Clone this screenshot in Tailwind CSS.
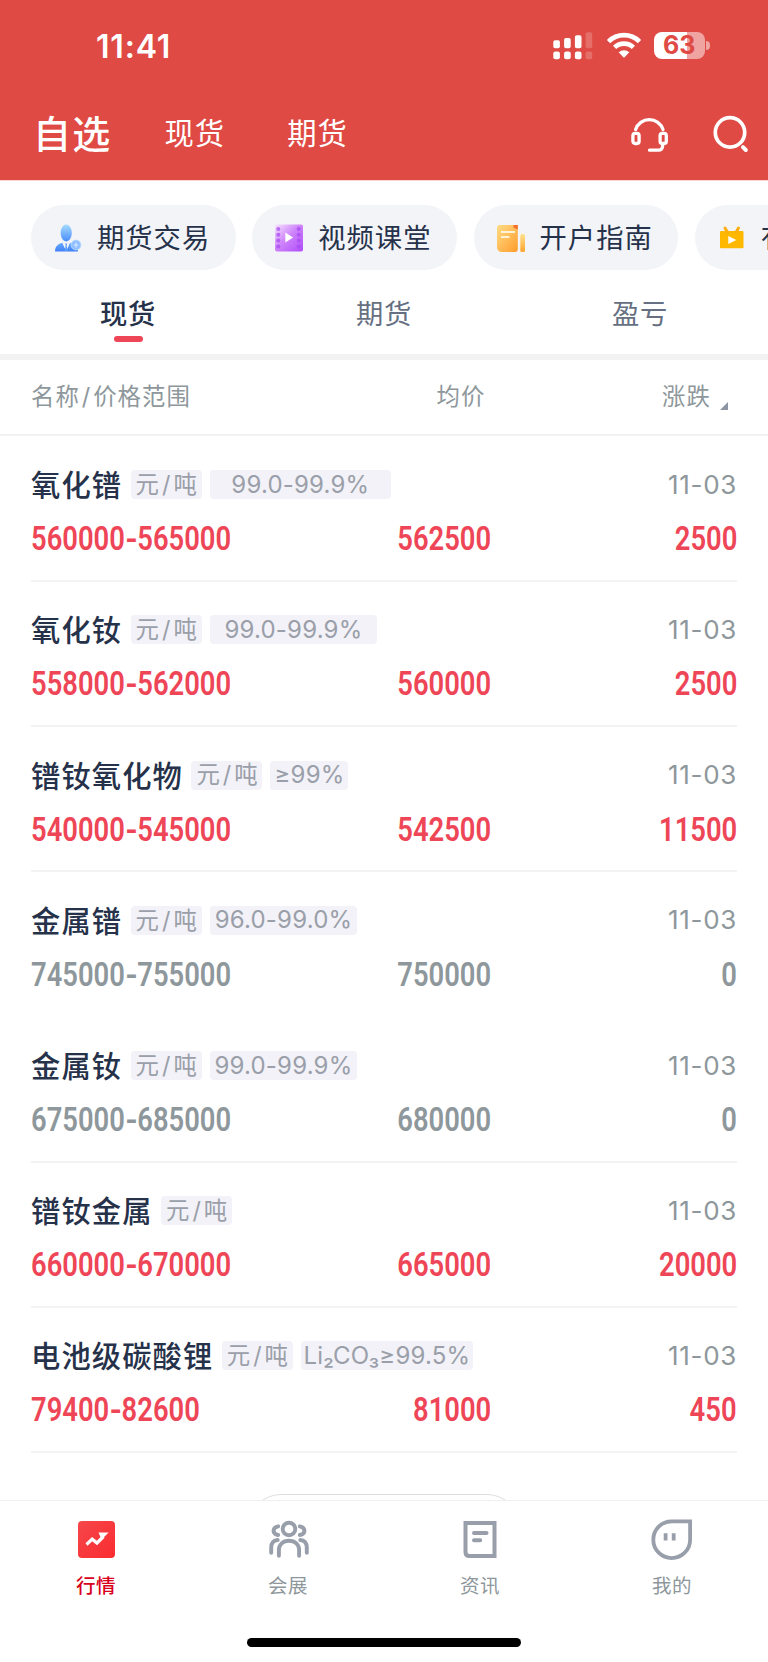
<!DOCTYPE html>
<html lang="zh-CN">
<head>
    <meta charset="UTF-8">
    <meta name="viewport" content="width=device-width, initial-scale=1.0">
    <title>行情</title>
    <script src="https://cdn.jsdelivr.net/npm/@tailwindcss/browser@4"></script>
</head>
<body class="bg-white font-['Inter','Noto_Sans_CJK_SC',sans-serif]">
    <div class="w-[768px] h-[1662px] flex flex-col overflow-hidden">

        <!-- Status bar + top navigation -->
        <header class="h-[181px] shrink-0 bg-[#df4a44] border-b border-[#fbd3d3] text-white flex flex-col">
            <div class="h-[90px] flex items-center justify-between pl-[96px] pr-[58px]">
                <span class="text-[32px] leading-none font-semibold pt-[3px] tracking-[0.8px]">11:41</span>
                <div class="flex items-center pt-[1px]">
                    <svg class="w-[40px] h-[28px]" viewBox="0 0 40 28" fill="#fff">
                        <rect x="0.3" y="8.3" width="6.6" height="8" rx="1.8"/>
                        <rect x="11.1" y="6" width="6.6" height="10.3" rx="1.8"/>
                        <rect x="21.9" y="3.2" width="6.6" height="13" rx="1.8"/>
                        <rect x="32.6" y="0.3" width="6.6" height="16" rx="1.8" opacity=".2"/>
                        <rect x="0.3" y="19.6" width="6.6" height="7.6" rx="2"/>
                        <rect x="11.1" y="19.6" width="6.6" height="7.6" rx="2"/>
                        <rect x="21.9" y="19.6" width="6.6" height="7.6" rx="2"/>
                        <rect x="32.6" y="19.6" width="6.6" height="7.6" rx="2" opacity=".2"/>
                    </svg>
                    <svg class="w-[36px] h-[28px] ml-[13px]" viewBox="0 0 36 28">
                        <path d="M2.5 9.6A22 22 0 0 1 33.5 9.6" fill="none" stroke="#fff" stroke-width="4.8"/>
                        <path d="M8.6 15.4A13.6 13.6 0 0 1 27.4 15.4" fill="none" stroke="#fff" stroke-width="4.6"/>
                        <path d="M12.7 20.3A8 8 0 0 1 23.3 20.3L18.6 25.2Q18 25.8 17.4 25.2Z" fill="#fff"/>
                    </svg>
                    <div class="ml-[12px] w-[51.5px] h-[27px] rounded-[8px] bg-linear-to-r from-white from-64% to-white/50 to-64% flex items-center justify-center">
                        <span class="text-[25px] leading-[27px] font-bold text-[#df4a44]">63</span>
                    </div>
                    <div class="ml-[1px] w-[4px] h-[9px] rounded-r-full bg-white/50"></div>
                </div>
            </div>
            <div class="h-[87px] flex items-center pl-[33px] pr-[16px]">
                <span class="text-[38px] leading-none font-medium tracking-[1.2px]">自选</span>
                <span class="text-[29.3px] leading-none tracking-[1.1px] ml-[53px]">现货</span>
                <span class="text-[29.3px] leading-none tracking-[1.1px] ml-[62px]">期货</span>
                <svg class="w-[40px] h-[40px] ml-auto" viewBox="0 0 40 40" fill="none" stroke="#fff" stroke-width="3.3" stroke-linecap="round">
                    <path d="M5.6 15.6A14.4 14.4 0 0 1 33 15.6"/>
                    <rect x="2.9" y="19.3" width="6.2" height="10.2" rx="2.2"/>
                    <rect x="30.1" y="19.3" width="6.2" height="10.2" rx="2.2"/>
                    <path d="M32.6 30.5v1.2c0 3-1.5 4.5-4.5 4.5H19.5"/>
                </svg>
                <svg class="w-[40px] h-[40px] ml-[42px]" viewBox="0 0 40 40" fill="none" stroke="#fff" stroke-linecap="round">
                    <circle cx="18" cy="18.4" r="14.7" stroke-width="3.7"/>
                    <path d="M31 33.2l2.8 2.8" stroke-width="4"/>
                </svg>
            </div>
        </header>

        <!-- Shortcuts -->
        <div class="h-[89px] shrink-0 pt-[24px] pl-[31px] flex gap-[16.4px] text-[27.3px] leading-none tracking-[1px] text-[#26314a]">
            <div class="w-[204.9px] h-[65px] shrink-0 rounded-full bg-[#f2f4f8] flex items-center pl-[23px] gap-[15px]">
                <svg class="w-[28px] h-[28px]" viewBox="0 0 28 28">
                    <defs>
                        <linearGradient id="head" x1="0" y1="0" x2="0" y2="1"><stop stop-color="#a5dcff"/><stop offset="1" stop-color="#4a8dfb"/></linearGradient>
                        <linearGradient id="body" x1="0" y1="0" x2="0" y2="1"><stop stop-color="#69aaff"/><stop offset="1" stop-color="#3f80f6"/></linearGradient>
                    </defs>
                    <path d="M1 27.5C1 22 4.5 20 8.5 18.8L12.2 27l3.6-8.2c4 1.2 8.2 3.5 8.2 8.7z" fill="url(#body)"/>
                    <path d="M8.5 18.8h7.4L12.2 27z" fill="#f2f4f8"/>
                    <path d="M11.2 19.5h2l-.5 1.9.9 5.6h-2.8l.9-5.6z" fill="#5b9dfc"/>
                    <ellipse cx="12.2" cy="9" rx="5.6" ry="8.5" fill="url(#head)"/>
                    <circle cx="22" cy="21" r="4.9" fill="#8fbfff" stroke="#b9d9ff" stroke-width=".8"/>
                    <path d="M22 18.4v5.2M19.6 21h4.8" stroke="#d3e8ff" stroke-width="1.2"/>
                </svg>
                <span class="pt-[2px]">期货交易</span>
            </div>
            <div class="w-[204.9px] h-[65px] shrink-0 rounded-full bg-[#f2f4f8] flex items-center pl-[23px] gap-[15px]">
                <svg class="w-[28px] h-[28px]" viewBox="0 0 28 28">
                    <defs>
                        <linearGradient id="film" x1="0" y1="0" x2="1" y2="1"><stop stop-color="#f7e4ff"/><stop offset=".45" stop-color="#cf86fb"/><stop offset="1" stop-color="#b04bfa"/></linearGradient>
                    </defs>
                    <rect x="0" y=".5" width="28" height="27" rx="2" fill="url(#film)"/>
                    <g fill="#a94cf0" opacity=".75">
                        <circle cx="3.3" cy="5" r="2"/><circle cx="3.3" cy="10.8" r="2"/><circle cx="3.3" cy="16.6" r="2"/><circle cx="3.3" cy="22.4" r="2"/>
                        <circle cx="23.7" cy="5" r="2"/><circle cx="23.7" cy="10.8" r="2"/><circle cx="23.7" cy="16.6" r="2"/><circle cx="23.7" cy="22.4" r="2"/>
                    </g>
                    <path d="M10.3 8.5l7.8 5-7.8 5z" fill="#fff"/>
                </svg>
                <span class="pt-[2px]">视频课堂</span>
            </div>
            <div class="w-[204.9px] h-[65px] shrink-0 rounded-full bg-[#f2f4f8] flex items-center pl-[23px] gap-[15px]">
                <svg class="w-[28px] h-[28px]" viewBox="0 0 28 28">
                    <defs>
                        <linearGradient id="note" x1="0" y1="0" x2="1" y2="1"><stop stop-color="#ffdc85"/><stop offset="1" stop-color="#ff9c2c"/></linearGradient>
                        <linearGradient id="pen" x1="0" y1="0" x2="0" y2="1"><stop stop-color="#ffe28c"/><stop offset="1" stop-color="#ffa32e"/></linearGradient>
                    </defs>
                    <path d="M2.5 1H20.8V25c0 2-1 3-2.5 3H5C2 28 0 26 0 23V3.5C0 2 1 1 2.5 1z" fill="url(#note)"/>
                    <path d="M16.5 1h4.3v4.5l-4.3-2z" fill="#f4702c"/>
                    <rect x="23.3" y="10" width="4.7" height="18" rx="1.5" fill="url(#pen)"/>
                    <path d="M4 8h14M4 13h8.500" stroke="#fff3d6" stroke-width="2"/>
                </svg>
                <span class="pt-[2px]">开户指南</span>
            </div>
            <div class="w-[204.9px] h-[65px] shrink-0 rounded-full bg-[#f2f4f8] flex items-center pl-[24px] gap-[14px]">
                <svg class="w-[28px] h-[28px]" viewBox="0 0 28 28">
                    <rect x="1" y="7" width="23.5" height="17.3" rx="1" fill="#ffb800"/>
                    <path d="M6 4l2.3 4M19.5 4l-2.3 4" stroke="#ffad0d" stroke-width="3" stroke-linecap="round"/>
                    <path d="M9.3 12v8l8-4z" fill="#fff"/>
                </svg>
                <span class="pt-[2px]">有</span>
            </div>
        </div>

        <!-- Tabs -->
        <nav class="h-[90px] shrink-0 border-b-[6px] border-[#f2f2f2] grid grid-cols-3 text-[27.3px] leading-none tracking-[0.8px] text-[#667082] text-center">
            <div class="pt-[31px] flex flex-col items-center">
                <span class="font-medium text-[#26314a]">现货</span>
                <span class="mt-[8px] w-[29px] h-[6px] rounded-full bg-[#ee4557]"></span>
            </div>
            <div class="pt-[31px]">期货</div>
            <div class="pt-[31px]">盈亏</div>
        </nav>

        <!-- Table head -->
        <div class="h-[76px] shrink-0 border-b-2 border-[#f2f2f2] flex items-center px-[31px] pb-[1px] text-[23.4px] leading-none tracking-[1px] text-[#8e979b]">
            <span class="w-[405.5px]">名称<span class="mx-[2px]">/</span>价格范围</span>
            <span class="w-[225.5px]">均价</span>
            <span>涨跌</span>
            <svg class="w-[8px] h-[8px] ml-[9px] mt-[18px]" viewBox="0 0 8 8"><path d="M8 0v8H0z" fill="#8f96a3"/></svg>
        </div>

        <!-- Price rows -->
        <main id="priceList" class="shrink-0 h-[1017.4px] px-[31px] pt-[0.8px]"></main>

        <div class="flex-1 min-h-0 overflow-hidden flex justify-center pt-[40.6px]">
            <div class="w-[272px] h-[66px] shrink-0 rounded-full border border-[#dedede]"></div>
        </div>

        <!-- Bottom navigation -->
        <footer class="h-[162px] shrink-0 bg-white border-t border-[#f0f0f0] flex flex-col items-center text-[19.5px] leading-none tracking-[0.5px] text-[#8e979b]">
            <div class="w-full h-[137px] grid grid-cols-4">
                <div class="pt-[17px] flex flex-col items-center gap-[16px] text-[#d9001b] font-medium">
                    <svg class="w-[42px] h-[43px]" viewBox="0 0 42 43">
                        <defs><linearGradient id="trend" x1="0" y1="0" x2="1" y2="1"><stop stop-color="#f5474a"/><stop offset="1" stop-color="#fa2c30"/></linearGradient></defs>
                        <rect x="3" y="3" width="37" height="37" rx="4" fill="url(#trend)"/>
                        <path d="M11.5 26.5l5.7-5.3 4.8 3.800L28.5 18.5" fill="none" stroke="#fff" stroke-width="3.2"/>
                        <path d="M23.5 14.5h10.2L26.5 21.5z" fill="#fff"/>
                    </svg>
                    <span>行情</span>
                </div>
                <div class="pt-[17px] flex flex-col items-center gap-[16px]">
                    <svg class="w-[42px] h-[43px]" viewBox="0 0 42 43" fill="none" stroke="#989eaa" stroke-width="3.9" stroke-linecap="round">
                        <circle cx="22" cy="11" r="6.3"/>
                        <path d="M11.9 37.8v-6c0-5.2 4-9 10.1-9s10.1 3.8 10.1 9v6"/>
                        <path d="M11.2 8.3C5 9.5 5 15.8 11.2 17M32.8 8.3c6.2 1.2 6.2 7.5 0 8.7"/>
                        <path d="M4.2 34.8V29.5c0-4.5 2.5-7.3 6.5-7.5M39.8 34.8V29.5c0-4.5-2.5-7.3-6.5-7.5"/>
                    </svg>
                    <span>会展</span>
                </div>
                <div class="pt-[17px] flex flex-col items-center gap-[16px]">
                    <svg class="w-[42px] h-[43px]" viewBox="0 0 42 43" fill="none" stroke="#989eaa" stroke-width="4">
                        <path d="M6.5 5h29v33H10.5c-2.5 0-4-1.5-4-4z"/>
                        <path d="M15 15h12.5M15 22.3h6.2" stroke-linecap="round"/>
                    </svg>
                    <span>资讯</span>
                </div>
                <div class="pt-[17px] flex flex-col items-center gap-[16px]">
                    <svg class="w-[42px] h-[43px]" viewBox="0 0 42 43" fill="none" stroke="#989eaa" stroke-width="3.8">
                        <path d="M20.7 3.3H39.1V21.7A18.4 18.4 0 1 1 20.7 3.3z"/>
                        <path d="M14.6 15.3v7.3M22.7 15.3v7.3"/>
                    </svg>
                    <span>我的</span>
                </div>
            </div>
            <div class="w-[274px] h-[9px] rounded-full bg-black"></div>
        </footer>
    </div>

    <script>
        const rows = [
            { name: '氧化镨', spec: '99.0-99.9%', specWidth: 181.3, low: '560000', high: '565000', avg: '562500', change: '2500', line: true },
            { name: '氧化钕', spec: '99.0-99.9%', specWidth: 167.5, low: '558000', high: '562000', avg: '560000', change: '2500', line: true },
            { name: '镨钕氧化物', spec: '≥99%', specWidth: 78, low: '540000', high: '545000', avg: '542500', change: '11500', line: true },
            { name: '金属镨', spec: '96.0-99.0%', specWidth: 147.5, low: '745000', high: '755000', avg: '750000', change: '0', line: false },
            { name: '金属钕', spec: '99.0-99.9%', specWidth: 147.5, low: '675000', high: '685000', avg: '680000', change: '0', line: true },
            { name: '镨钕金属', spec: '', specWidth: 0, low: '660000', high: '670000', avg: '665000', change: '20000', line: true },
            { name: '电池级碳酸锂', spec: 'Li₂CO₃≥99.5%', specWidth: 172, low: '79400', high: '82600', avg: '81000', change: '450', line: true },
        ];

        document.getElementById('priceList').innerHTML = rows.map(r => `
            <div class="h-[145.2px] border-b-2 ${r.line ? 'border-[#f2f3f3]' : 'border-transparent'} pt-[31px]">
                <div class="h-[36px] flex items-center leading-none">
                    <span class="text-[29.3px] font-medium tracking-[1.1px] text-[#26314a]">${r.name}</span>
                    <span class="ml-[8.5px] mb-[2px] w-[71px] h-[29px] rounded-[4px] bg-[#f2f2f8] flex items-center justify-center text-[23.4px] text-[#9a9fa9]">元<span class="mx-[3px]">/</span>吨</span>
                    ${r.spec ? `<span class="ml-[8px] mb-[2px] h-[29px] rounded-[4px] bg-[#f2f2f8] flex items-center justify-center whitespace-nowrap text-[24px] tracking-[0.2px] text-[#9a9fa9]" style="width:${r.specWidth}px">${r.spec}</span>` : ''}
                    <span class="ml-auto mb-[2px] text-[26px] tracking-[0.7px] text-[#8e979b]">11-03</span>
                </div>
                <div class="mt-[17px] h-[36px] flex items-center font-['Roboto'] font-semibold text-[33px] leading-none ${r.change === '0' ? 'text-[#8e979b]' : 'text-[#ee4557]'}">
                    <div class="w-[300px]"><span class="inline-block origin-left scale-x-[0.83]">${r.low}<span class="inline-block mx-[1.4px] scale-x-[1.2]">-</span>${r.high}</span></div>
                    <div class="w-[160.5px] text-right"><span class="inline-block origin-right scale-x-[0.83]">${r.avg}</span></div>
                    <div class="flex-1 text-right"><span class="inline-block origin-right scale-x-[0.83]">${r.change}</span></div>
                </div>
            </div>`).join('');
    </script>
</body>
</html>
